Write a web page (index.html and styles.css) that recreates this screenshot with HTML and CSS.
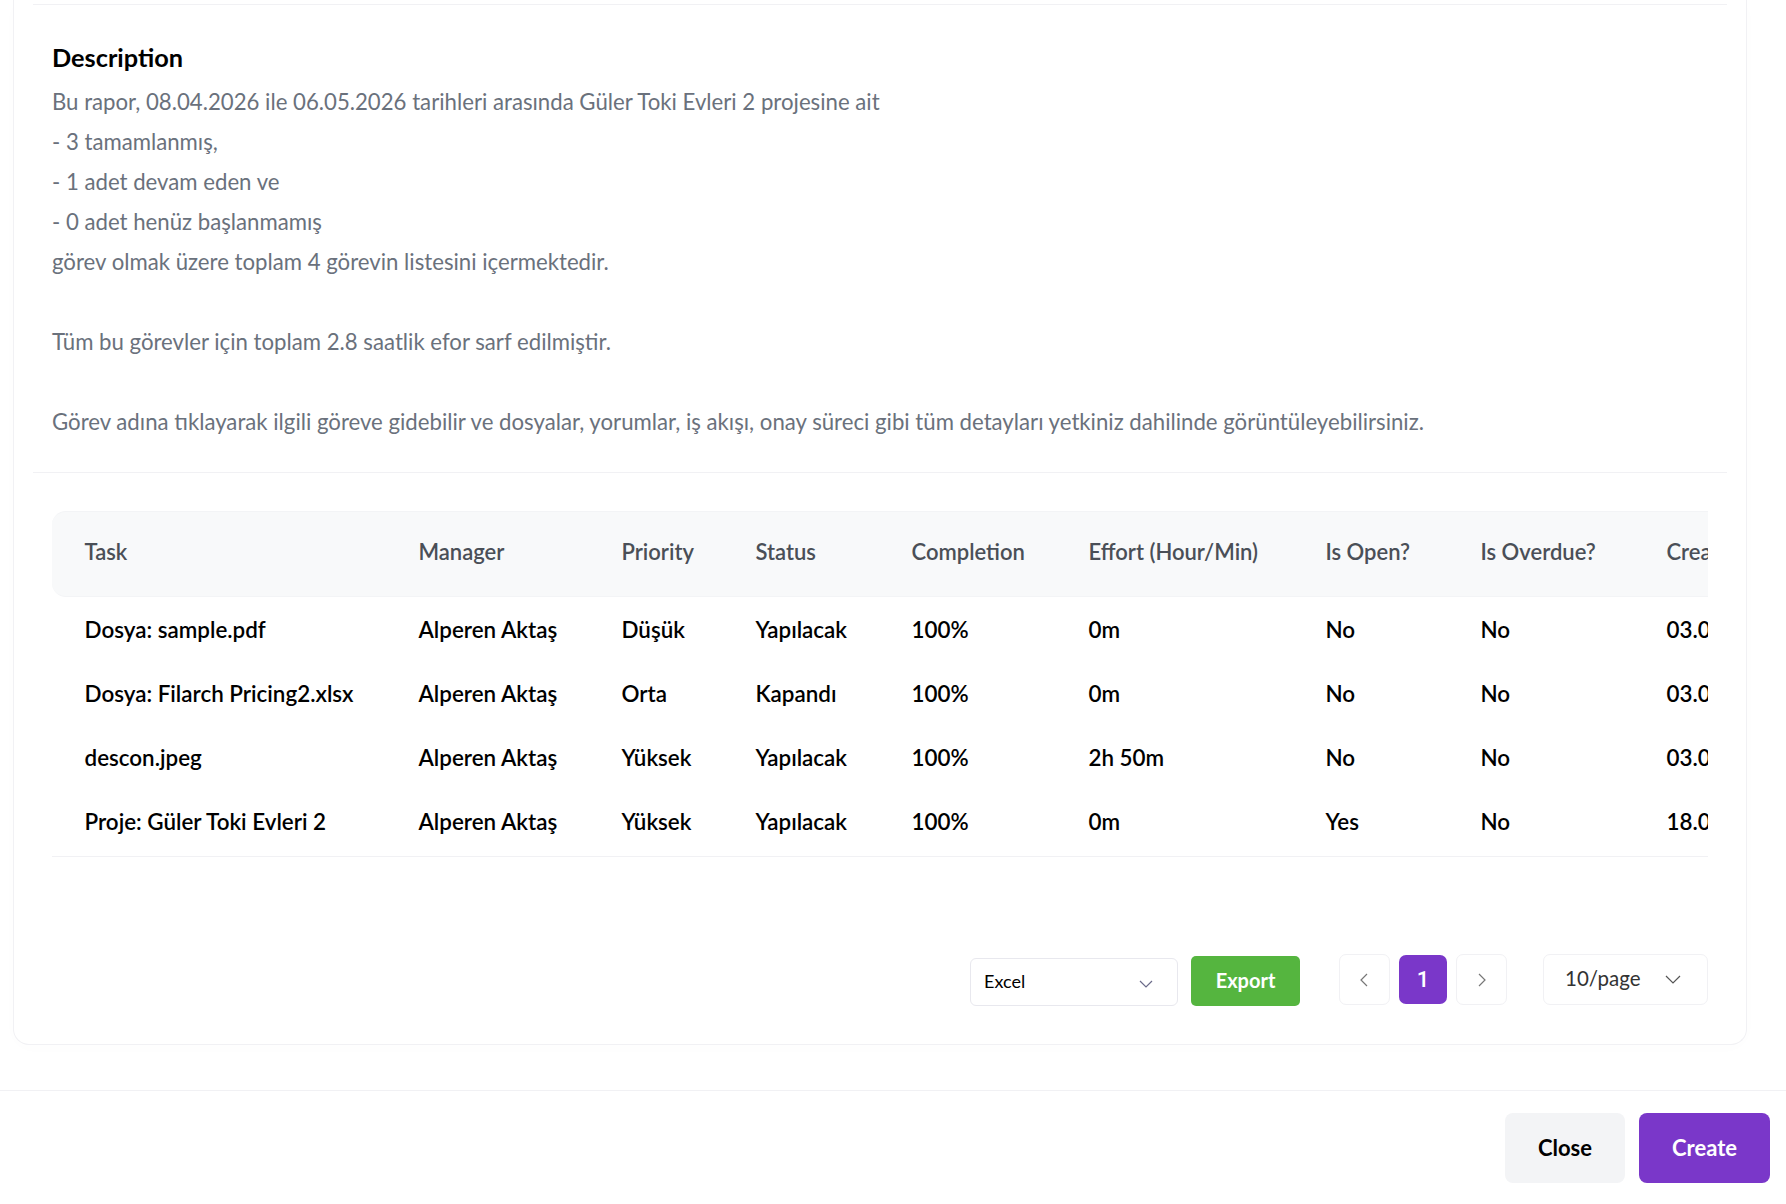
FILE: index.html
```html
<!DOCTYPE html>
<html lang="tr">
<head>
<meta charset="utf-8">
<title>Report</title>
<link rel="stylesheet" href="styles.css">
</head>
<body>
<div class="page">
  <main class="card">
    <hr class="rule rule-top">
    <section class="desc">
      <h2 class="desc-title">Description</h2>
      <p class="desc-line">Bu rapor, 08.04.2026 ile 06.05.2026 tarihleri arasında Güler Toki Evleri 2 projesine ait</p>
      <p class="desc-line">- 3 tamamlanmış,</p>
      <p class="desc-line">- 1 adet devam eden ve</p>
      <p class="desc-line">- 0 adet henüz başlanmamış</p>
      <p class="desc-line">görev olmak üzere toplam 4 görevin listesini içermektedir.</p>
      <p class="desc-line desc-gap">Tüm bu görevler için toplam 2.8 saatlik efor sarf edilmiştir.</p>
      <p class="desc-line desc-gap">Görev adına tıklayarak ilgili göreve gidebilir ve dosyalar, yorumlar, iş akışı, onay süreci gibi tüm detayları yetkiniz dahilinde görüntüleyebilirsiniz.</p>
    </section>
    <hr class="rule">
    <div class="table-wrap">
      <table class="grid">
        <colgroup>
          <col class="c1"><col class="c2"><col class="c3"><col class="c4"><col class="c5"><col class="c6"><col class="c7"><col class="c8"><col class="c9">
        </colgroup>
        <thead>
          <tr><th>Task</th><th>Manager</th><th>Priority</th><th>Status</th><th>Completion</th><th>Effort (Hour/Min)</th><th>Is Open?</th><th>Is Overdue?</th><th>Created Date</th></tr>
        </thead>
        <tbody>
          <tr><td>Dosya: sample.pdf</td><td>Alperen Aktaş</td><td>Düşük</td><td>Yapılacak</td><td>100%</td><td>0m</td><td>No</td><td>No</td><td>03.05.2026</td></tr>
          <tr><td>Dosya: Filarch Pricing2.xlsx</td><td>Alperen Aktaş</td><td>Orta</td><td>Kapandı</td><td>100%</td><td>0m</td><td>No</td><td>No</td><td>03.05.2026</td></tr>
          <tr><td>descon.jpeg</td><td>Alperen Aktaş</td><td>Yüksek</td><td>Yapılacak</td><td>100%</td><td>2h 50m</td><td>No</td><td>No</td><td>03.05.2026</td></tr>
          <tr><td>Proje: Güler Toki Evleri 2</td><td>Alperen Aktaş</td><td>Yüksek</td><td>Yapılacak</td><td>100%</td><td>0m</td><td>Yes</td><td>No</td><td>18.04.2026</td></tr>
        </tbody>
      </table>
    </div>
    <div class="controls">
      <div class="select-excel">
        <span>Excel</span>
        <svg class="chev-excel" viewBox="0 0 14 8" aria-hidden="true"><path d="M1 1l6 6 6-6"/></svg>
      </div>
      <button class="btn-export" type="button">Export</button>
      <div class="pager">
        <button class="page-btn" type="button" aria-label="Previous"><svg class="chev-page chev-prev" viewBox="0 0 8 14" aria-hidden="true"><path d="M7 1L1 7l6 6"/></svg></button>
        <button class="page-btn page-current" type="button">1</button>
        <button class="page-btn" type="button" aria-label="Next"><svg class="chev-page" viewBox="0 0 8 14" aria-hidden="true"><path d="M1 1l6 6-6 6"/></svg></button>
      </div>
      <div class="select-size">
        <span>10/page</span>
        <svg class="chev-size" viewBox="0 0 16 9" aria-hidden="true"><path d="M1 1l7 7 7-7"/></svg>
      </div>
    </div>
  </main>
  <footer class="foot">
    <button class="btn-close" type="button">Close</button>
    <button class="btn-create" type="button">Create</button>
  </footer>
</div>
</body>
</html>
```
FILE: styles.css
```css
* { box-sizing: border-box; }
html, body { margin: 0; padding: 0; background: #fff; }
body { font-family: "Lato", "Noto Sans", sans-serif; color: #000; }
.page { width: 1786px; height: 1204px; overflow: hidden; display: flex; flex-direction: column; }
.card {
  width: 1734px; height: 1045px; margin-left: 13px; padding: 4px 19px 0;
  border: 1px solid #f1f1f4; border-top: 0; border-radius: 0 0 16px 16px;
  box-shadow: 0 3px 20px rgba(0,0,0,.012); flex: none; background: #fff;
}
.rule { margin: 0; border: 0; border-top: 1px solid #f1f1f4; height: 0; }
.desc { padding: 37px 19px 28px; height: 467px; }
.desc-title { margin: 0 0 10px; font-size: 25.3px; line-height: 30px; font-weight: 700; color: #000; }
.desc-line { margin: 0; font-size: 22.2px; line-height: 40px; color: #6a717c; }
.desc-gap { margin-top: 40px; }
.table-wrap { margin: 38px 19px 0; height: 346px; overflow: hidden; border-bottom: 1px solid #f1f1f4; }
.grid { border-collapse: separate; border-spacing: 0; table-layout: fixed; width: 1782px; }
.c1 { width: 334px; } .c2 { width: 203px; } .c3 { width: 134px; } .c4 { width: 156px; } .c5 { width: 177px; }
.c6 { width: 237px; } .c7 { width: 155px; } .c8 { width: 186px; } .c9 { width: 200px; }
.grid th, .grid td { padding: 0 0 0 32.5px; text-align: left; white-space: nowrap; font-weight: 600; }
.grid th { height: 86px; padding-bottom: 5px; font-size: 22px; background: #f8f9fa; color: #4a4f57; border-top: 1px solid #f3f4f6; border-bottom: 1px solid #f3f4f6; }
.grid th:first-child { border-top-left-radius: 14px; border-bottom-left-radius: 14px; }
.grid td { height: 64px; padding-bottom: 4px; font-size: 22.4px; color: #000; }
.grid tbody tr:first-child td { height: 66px; padding-top: 2px; }
.controls { display: flex; justify-content: flex-end; align-items: flex-end; height: 52px; margin: 97px 19px 0; }
.select-excel {
  width: 208px; height: 48px; display: flex; align-items: center; justify-content: space-between;
  padding: 0 24px 2px 13px; border: 1px solid #e8e8ee; border-radius: 6px; font-size: 18px; background: #fff;
}
.chev-excel { width: 14px; height: 8px; margin-top: 6px; }
.chev-excel path, .chev-page path, .chev-size path { fill: none; stroke-width: 1.2; }
.chev-excel path { stroke: #6b6b8a; }
.btn-export {
  width: 109px; height: 50px; padding: 0 0 3px; margin-left: 13px; border: 0; border-radius: 5px; background: #55b53f;
  color: #fff; font: 700 20px "Lato", sans-serif;
}
.pager { display: flex; gap: 9px; margin: 0 36px 1px 39px; }
.page-btn {
  width: 51px; height: 51px; padding: 0; border: 1px solid #f1f1f4; border-radius: 7px; background: #fff;
  display: flex; align-items: center; justify-content: center;
}
.page-current { width: 48px; height: 49px; margin-top: 1px; border: 0; background: #7a37c9; color: #fff; font: 500 22px "Roboto", sans-serif; }
.chev-page { width: 8px; height: 14px; }
.chev-prev { margin-right: 2px; }
.chev-page path { stroke: #777; }
.select-size {
  width: 165px; height: 51px; margin-bottom: 1px; display: flex; align-items: center; justify-content: space-between;
  padding: 0 26px 3px 21px; border: 1px solid #f1f1f4; border-radius: 7px; font-size: 20.5px; color: #333;
}
.chev-size { width: 16px; height: 9px; margin-top: 3px; }
.chev-size path { stroke: #555; }
.foot {
  margin-top: 45px; height: 114px; border-top: 1px solid #f1f1f4; flex: none;
  display: flex; justify-content: flex-end; gap: 14px; padding: 22px 16px 0 0;
}
.btn-close, .btn-create { height: 70px; padding: 0 0 2px; border: 0; border-radius: 8px; font: 700 22px "Lato", sans-serif; }
.btn-close { width: 120px; background: #f3f4f6; color: #000; }
.btn-create { width: 131px; background: #7a37c9; color: #fff; }
```
